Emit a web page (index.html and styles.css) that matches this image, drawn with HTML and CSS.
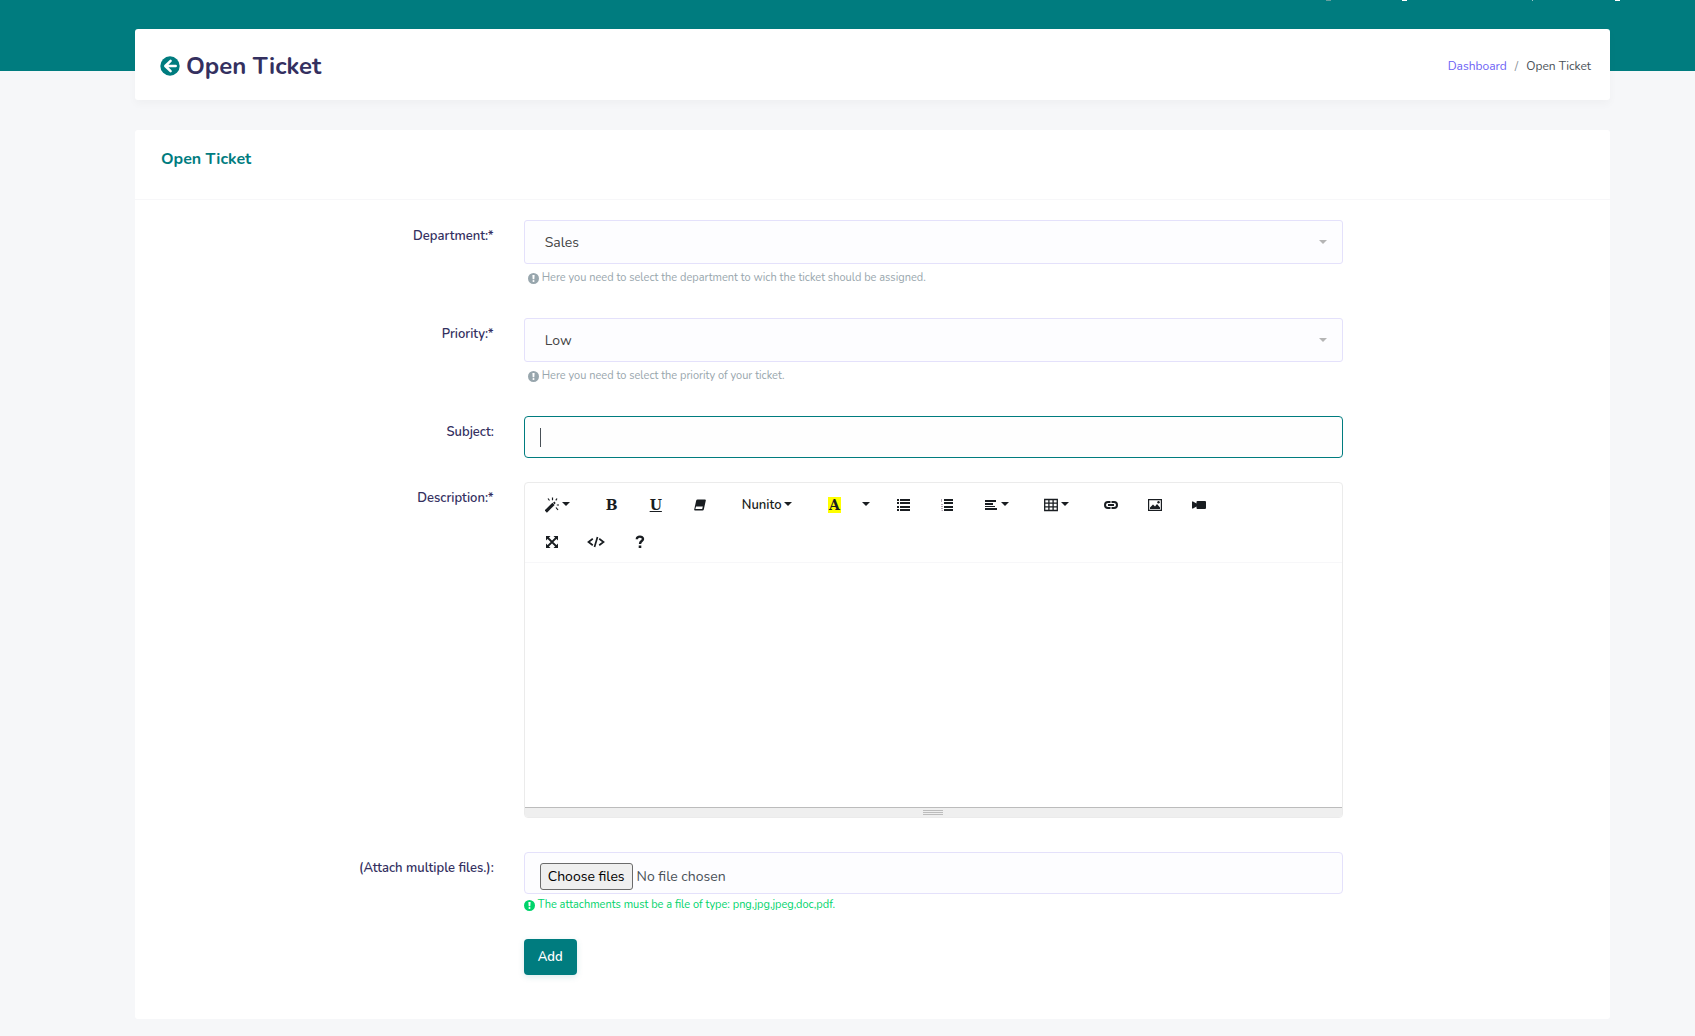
FILE: index.html
```html
<!DOCTYPE html>
<html lang="en">
<head>
<meta charset="utf-8">
<meta name="viewport" content="width=device-width, initial-scale=1">
<title>Open Ticket</title>
<link rel="stylesheet" href="styles.css">
</head>
<body>
<svg class="sprite" aria-hidden="true">
  <symbol id="info" viewBox="0 0 16 16"><path fill-rule="evenodd" d="M8 0a8 8 0 1 1 0 16A8 8 0 0 1 8 0zM6.400 3l.4 6h2.400l.4-6zM8 10.200a1.500 1.500 0 1 0 0 3 1.500 1.500 0 0 0 0-3z"/></symbol>
</svg>
<div class="topbar">
  <svg class="topbar-marks" width="295" height="1" viewBox="0 0 295 1" aria-hidden="true"><path fill="#669f9f" d="M1 0h5v1H1z"/><path fill="#fff" d="M77 0h5v1h-5zM290 0h5v1h-5z"/><path fill="#99c8c8" d="M207 0h1v1h-1z"/></svg>
</div>
<main class="page">
  <header class="card page-head">
    <h1 class="page-title">
      <a href="#" class="back" aria-label="Back"><svg width="20" height="20" viewBox="0 0 20 20"><circle cx="10" cy="10" r="9.700" fill="currentColor"/><path d="M10.600 4.800 5.300 10l5.300 5.200M5.700 10h10" fill="none" stroke="#fff" stroke-width="2.500" stroke-linecap="round" stroke-linejoin="round"/></svg></a>
      Open Ticket
    </h1>
    <nav class="crumbs" aria-label="Breadcrumb"><a href="#">Dashboard</a><span class="slash">/</span><span>Open Ticket</span></nav>
  </header>

  <section class="card">
    <div class="card-head"><h2>Open Ticket</h2></div>
    <form class="form">
      <div class="row">
        <label class="label" for="department">Department:*</label>
        <div class="field">
          <div class="select"><select id="department"><option>Sales</option></select></div>
          <p class="help indent"><svg class="dot"><use href="#info"/></svg>Here you need to select the department to wich the ticket should be assigned.</p>
        </div>
      </div>
      <div class="row">
        <label class="label" for="priority">Priority:*</label>
        <div class="field">
          <div class="select"><select id="priority"><option>Low</option></select></div>
          <p class="help indent"><svg class="dot"><use href="#info"/></svg>Here you need to select the priority of your ticket.</p>
        </div>
      </div>
      <div class="row">
        <label class="label" for="subject">Subject:</label>
        <div class="field"><input class="text active" id="subject" type="text"></div>
      </div>
      <div class="row tall">
        <label class="label" for="description">Description:*</label>
        <div class="field">
          <div class="editor">
            <div class="toolbar">
              <div class="group"><button type="button" class="tool" aria-label="Style"><svg width="14" height="16" viewBox="0 0 14 16"><path d="M.8 14.500 8.500 6.800" stroke="currentColor" stroke-width="3.200"/><path d="M8.800 6.500 10 5.300" stroke="currentColor" stroke-width="2"/><path d="M7.500 .5v2.700M3 1.500l1.500 2M12 1.500 10.800 3.300M11.800 8H14M11 10.500l2 2.500" stroke="currentColor" stroke-width="1.200"/></svg><i class="caret"></i></button></div>
              <div class="group">
                <button type="button" class="tool serif" aria-label="Bold">B</button>
                <button type="button" class="tool serif under" aria-label="Underline">U</button>
                <button type="button" class="tool" aria-label="Clear formatting"><svg width="14" height="14" viewBox="0 0 14 14"><path fill-rule="evenodd" d="M4.500 1.500h7.500q1 0 .8 1l-2 9q-.2 1-1.300 1H2q-1 0-.8-1l2-9q.3-1 1.300-1zM3 8.500 2.400 11h6.800l.6-2.500z"/></svg></button>
              </div>
              <div class="group"><button type="button" class="tool">Nunito<i class="caret"></i></button></div>
              <div class="group">
                <button type="button" class="tool serif" aria-label="Recent color"><span class="mark">A</span></button>
                <button type="button" class="tool slim" aria-label="More colors"><i class="caret"></i></button>
              </div>
              <div class="group">
                <button type="button" class="tool" aria-label="Unordered list"><svg width="14" height="14" viewBox="0 0 14 14"><path d="M1 1h2v2H1zM4 1h10v2H4zM1 4h2v2H1zM4 4h10v2H4zM1 8h2v2H1zM4 8h10v2H4zM1 11h2v2H1zM4 11h10v2H4z"/></svg></button>
                <button type="button" class="tool" aria-label="Ordered list"><svg width="14" height="14" viewBox="0 0 14 14"><path d="M4 1h9v2H4zM4 4h9v2H4zM4 8h9v2H4zM4 11h9v2H4z"/><path fill="#b5a8b5" d="M1 1h1v3H1zM1 6h2v1H1zM1 8h2v1H1zM1 10h2v1H1zM2 12h1v1H1z"/></svg></button>
                <button type="button" class="tool" aria-label="Paragraph"><svg width="14" height="14" viewBox="0 0 14 14"><path d="M1 2h11v2H1zM1 5h8v2H1zM1 8h10v1H1zM1 10h12v2H1z"/></svg><i class="caret"></i></button>
              </div>
              <div class="group"><button type="button" class="tool" aria-label="Table"><svg width="14" height="14" viewBox="0 0 14 14"><path fill="none" stroke="currentColor" stroke-width="1.300" d="M.7 1.500h12.600v11H.7zM.7 5.200h12.600M.7 8.900h12.600M4.900 1.500v11M9.100 1.500v11"/></svg><i class="caret"></i></button></div>
              <div class="group">
                <button type="button" class="tool" aria-label="Link"><svg width="14" height="14" viewBox="0 0 14 14"><path fill="none" stroke="currentColor" stroke-width="2" d="M6.500 4H4a3 3 0 0 0 0 6h2.500M7.500 10H10a3 3 0 0 0 0-6H7.500M4 7h6"/></svg></button>
                <button type="button" class="tool" aria-label="Picture"><svg width="14" height="14" viewBox="0 0 14 14"><path fill="none" stroke="currentColor" stroke-width="1.200" d="M.6 1.600h12.800v10.800H.6z"/><path d="M2 11V9.500l3-3 2 2 2-2.500 3 3.500V11z"/><circle cx="10.500" cy="4.200" r="1.200"/></svg></button>
                <button type="button" class="tool" aria-label="Video"><svg width="14" height="14" viewBox="0 0 14 14"><path d="M5.500 3H13q1 0 1 1v6q0 1-1 1H5.500q-1 0-1-1V8.500L1 10.500H0v-7h1l3.500 2V4q0-1 1-1z"/></svg></button>
              </div>
              <div class="group">
                <button type="button" class="tool" aria-label="Full screen"><svg width="14" height="14" viewBox="0 0 14 14"><path d="M1 1h4.500L1 5.500zM13 1v4.500L8.500 1zM1 13V8.500L5.500 13zM13 13H8.500L13 8.500z"/><path stroke="currentColor" stroke-width="1.800" d="m2.500 2.500 9 9M11.500 2.500l-9 9"/></svg></button>
                <button type="button" class="tool" aria-label="Code view"><svg class="wide" width="18" height="14" viewBox="0 0 18 14"><path fill="none" stroke="currentColor" stroke-width="1.700" d="M5.800 3.800 1.500 7l4.300 3.200M12.200 3.800 16.500 7l-4.300 3.200M10.500 2l-3 10"/></svg></button>
                <button type="button" class="tool" aria-label="Help"><svg width="14" height="14" viewBox="0 0 14 14"><path fill="none" stroke="currentColor" stroke-width="2.400" d="M3.800 4.200C4 .8 10 .9 10 4c0 2.200-3 2-3 5"/><path d="M5.700 10.500h2.600V13H5.700z"/></svg></button>
              </div>
            </div>
            <textarea id="description" class="area"></textarea>
            <div class="grip"><i></i><i></i><i></i></div>
          </div>
        </div>
      </div>
      <div class="row files">
        <label class="label" for="files">(Attach multiple files.):</label>
        <div class="field">
          <label class="text file"><input class="hidden-file" id="files" type="file" multiple><span class="choose">Choose files</span><span>No file chosen</span></label>
          <p class="help green"><svg class="dot"><use href="#info"/></svg>The attachments must be a file of type: png,jpg,jpeg,doc,pdf.</p>
        </div>
      </div>
      <div class="row last"><div class="field submit"><button class="add" type="submit">Add</button></div></div>
    </form>
  </section>
</main>
</body>
</html>
```

FILE: styles.css
```css
* { box-sizing: border-box; }
body {
  margin: 0;
  background: #f6f7f9;
  color: #495057;
  font: 14px/20px Nunito, Lato, sans-serif;
}
.sprite { display: none; }
h1, h2, p { margin: 0; }
a { color: #6c5ff5; text-decoration: none; }
button, input, select, textarea { font: inherit; color: inherit; }

.topbar {
  display: flex;
  justify-content: flex-end;
  height: 71px;
  padding-right: 75px;
  background: #007c7f;
}
.page { margin: -42px 85px 0 135px; padding-bottom: 17px; }
.card { background: #fff; border-radius: 3px; }

.page-head {
  display: flex;
  align-items: center;
  justify-content: space-between;
  min-height: 71px;
  margin-bottom: 30px;
  padding: 2px 19px 0 25px;
  box-shadow: 0 4px 8px rgba(0, 0, 0, .03);
}
.page-title {
  display: flex;
  align-items: center;
  gap: 6px;
  color: #34305f;
  font-size: 24px;
  line-height: 32px;
}
.back { display: flex; color: #007c7f; }
.crumbs { display: flex; gap: 8px; font-size: 12px; }
.slash { color: #868e96; }

.card-head { height: 70px; padding: 18px 26px; border-bottom: 1px solid #f7f7f9; }
.card-head h2 { color: #007c7f; font-size: 16px; line-height: 22px; }

.form { padding: 20px 10px 44px; }
.row { display: grid; grid-template-columns: 3fr 7fr 2fr; margin-bottom: 30px; }
.label {
  padding: 6px 15px 0;
  color: #34305f;
  font-size: 13px;
  font-weight: 600;
  text-align: right;
}
.field { min-width: 0; padding: 0 15px; }

.select { position: relative; }
.select::after {
  content: "";
  position: absolute;
  right: 16px;
  top: 20px;
  border: 4px solid transparent;
  border-top-color: #b5b5b5;
  border-bottom: 0;
  pointer-events: none;
}
.select select {
  display: block;
  width: 100%;
  height: 44px;
  padding: 2px 20px 0;
  appearance: none;
  border: 1px solid #e4e1fb;
  border-radius: 3px;
  background: #fdfdff;
  color: #444;
}
.text {
  display: block;
  width: 100%;
  height: 42px;
  padding: 0 15px;
  border: 1px solid #e4e1fb;
  border-radius: 4px;
  background: #fdfdff;
}
.active {
  border-color: #007c7f;
  outline: 0;
  background: linear-gradient(#495057, #495057) 15px center / 1px 19px no-repeat #fefefe;
}
.row:has(.active) { margin-bottom: 24px; }
.help {
  display: flex;
  align-items: center;
  gap: 3px;
  padding-top: 4px;
  color: #98a6ad;
  font-size: 11px;
}
.indent { padding-left: 4px; }
.dot { flex: none; width: 11px; height: 11px; fill: currentColor; }
.green { padding-top: 1px; color: #00d36b; }

.editor { border: 1px solid #ebebeb; border-radius: 4px; overflow: hidden; }
.toolbar {
  display: flex;
  flex-wrap: wrap;
  gap: 0 5px;
  padding: 1px 100px 4px 5px;
  border-bottom: 1px solid #f7f7f9;
}
.group { display: flex; margin-top: 5px; }
.tool {
  display: flex;
  align-items: center;
  justify-content: center;
  gap: 3px;
  min-width: 44px;
  height: 32px;
  padding: 0 15px;
  border: 0;
  background: none;
  color: #191d21;
  font-size: 13px;
  font-weight: 600;
}
.tool svg { flex: none; fill: currentColor; }
.tool .wide { margin: 0 -2px; }
.serif { font: 900 14px/16px "DejaVu Serif", serif; }
.under { text-decoration: underline; }
.mark { width: 13px; background: #ff0; }
.slim { min-width: 20px; padding: 0 6px; }
.caret {
  margin-bottom: 3px;
  border: 4px solid transparent;
  border-top-color: currentColor;
  border-bottom: 0;
}
.area {
  display: block;
  width: 100%;
  height: 244px;
  padding: 10px;
  border: 0;
  background: #fff;
  resize: none;
}
.grip {
  display: flex;
  flex-direction: column;
  align-items: center;
  gap: 1px;
  height: 10px;
  padding-top: 2px;
  border-top: 1px solid #bcbcbc;
  background: #efefef;
}
.grip i { width: 20px; height: 1px; background: #bcbcbc; }

.tall { margin-bottom: 34px; }
.row.files { margin-bottom: 24px; }
.file { position: relative; display: flex; align-items: center; gap: 4px; padding-top: 7px; }
.hidden-file { position: absolute; inset: 0; opacity: 0; }
.choose {
  padding: 2px 7px;
  border: 1px solid #6b6b6b;
  border-radius: 3px;
  background: #efefef;
  color: #000;
  line-height: 21px;
}
.row.last { margin: 0; }
.submit { grid-column: 2; }
.add {
  height: 36px;
  padding: 0 14px;
  border: 0;
  border-radius: 4px;
  background: #007c7f;
  box-shadow: 0 2px 6px rgba(0, 124, 127, .15);
  color: #fff;
  font-size: 13px;
  font-weight: 600;
}
```
